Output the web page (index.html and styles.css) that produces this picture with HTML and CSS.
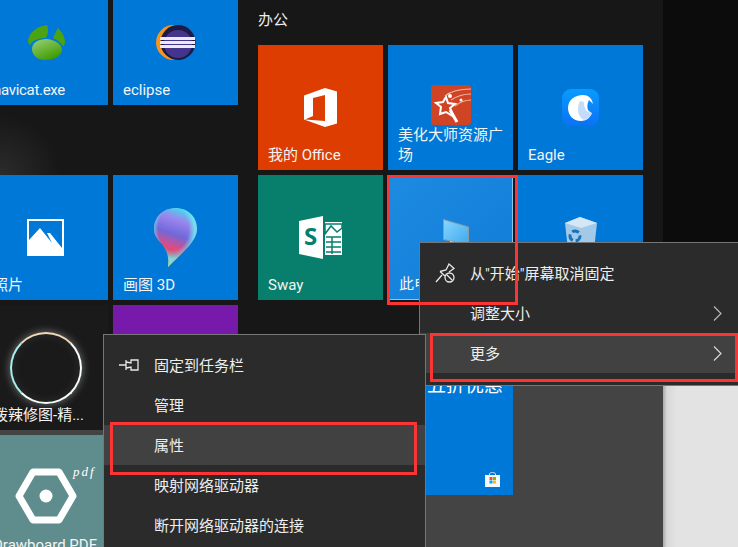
FILE: index.html
```html
<!DOCTYPE html>
<html lang="zh-CN">
<head>
    <meta charset="UTF-8">
    <meta name="viewport" content="width=device-width, initial-scale=1.0">
    <title>开始屏幕</title>
    <link rel="stylesheet" href="styles.css">
</head>
<body>

    <div class="screen">

        <!-- left group of tiles, cut off by the window edge -->
        <div class="group-left">
            <div class="tile">
                <svg class="icon" width="38" height="35" viewBox="0 0 38 35">
                    <defs>
                        <linearGradient id="navi" x1="0" y1="0" x2="0.6" y2="1">
                            <stop offset="0" stop-color="#9ad27c"/>
                            <stop offset="1" stop-color="#3f9c00"/>
                        </linearGradient>
                    </defs>
                    <path d="M1 17C1 9 9 1 20 0C22 5 21 9 19 13C12 13 6 15 3 20C2 19 1 18 1 17Z" fill="#4aa312"/>
                    <path d="M31 3C35 7 38 12 38 17C38 19 37 21 36 21C33 17 30 15 26 13C28 9 29 6 31 3Z" fill="#4aa312"/>
                    <path d="M5 24C5 18 11 14 20 14C29 15 35 20 35 25C35 31 27 35 18 35C10 35 5 30 5 24Z" fill="url(#navi)"/>
                </svg>
                <span class="label label-tight">navicat.exe</span>
            </div>
            <div class="tile">
                <svg class="icon" width="40" height="35" viewBox="0 0 40 35">
                    <circle cx="17.5" cy="17.5" r="17.5" fill="#f7941e"/>
                    <circle cx="22" cy="17.5" r="17.5" fill="#1d1a45"/>
                    <circle cx="22" cy="19" r="14" fill="#43358c"/>
                    <path d="M4 12h35v3H4zM4 16h35v3H4zM4 20h35v3H4z" fill="#ece9f4"/>
                </svg>
                <span class="label">eclipse</span>
            </div>

            <div class="tile tile-low">
                <svg class="icon" width="37" height="37" viewBox="0 0 37 37">
                    <path d="M1 1H36V36H1Z" fill="none" stroke="#fff" stroke-width="2"/>
                    <path d="M2 21L13 9L25 24L20 14L23 14L35 29V35H2Z" fill="#fff"/>
                </svg>
                <span class="label">照片</span>
            </div>
            <div class="tile tile-low">
                <svg class="icon" width="43" height="59" viewBox="0 0 43 59">
                    <defs>
                        <linearGradient id="paint" x1="0.6" y1="0" x2="0.35" y2="1">
                            <stop offset="0" stop-color="#45d8ec"/>
                            <stop offset="0.2" stop-color="#9a86ee"/>
                            <stop offset="0.45" stop-color="#7168d8"/>
                            <stop offset="0.68" stop-color="#e24a80"/>
                            <stop offset="0.85" stop-color="#d8404f"/>
                            <stop offset="1" stop-color="#f5a300"/>
                        </linearGradient>
                        <radialGradient id="paint-edge" cx="0.45" cy="0.36" r="0.5">
                            <stop offset="0.7" stop-color="#6fe8f0" stop-opacity="0"/>
                            <stop offset="1" stop-color="#6fe8f0" stop-opacity="0.9"/>
                        </radialGradient>
                    </defs>
                    <path d="M21.5 0C34 0 43 9 43 21C43 33 30 43 14 59C15 50 14 44 8 36C3 31 0 27 0 21C0 9 9 0 21.5 0Z" fill="url(#paint)"/>
                    <path d="M21.5 0C34 0 43 9 43 21C43 33 30 43 14 59C15 50 14 44 8 36C3 31 0 27 0 21C0 9 9 0 21.5 0Z" fill="url(#paint-edge)"/>
                </svg>
                <span class="label">画图 3D</span>
            </div>

            <div class="tile tile-dark">
                <div class="ring icon"></div>
                <span class="label">拨辣修图-精...</span>
            </div>
            <div class="tile tile-purple"></div>

            <div class="tile tile-slate">
                <svg class="icon icon-hex" width="108" height="60" viewBox="-24 0 108 60">
                    <path d="M3 30L17 6H43L57 30L43 54H17Z" fill="none" stroke="#fff" stroke-width="7" stroke-linejoin="round"/>
                    <circle cx="30" cy="30" r="6.5" fill="#fff"/>
                    <text class="pdf-mark" x="57" y="10">pdf</text>
                </svg>
                <span class="label">Drawboard PDF</span>
            </div>
        </div>

        <!-- office group -->
        <div class="group-main">
            <h3 class="group-title">办公</h3>
            <div class="tiles">
                <div class="tile tile-orange">
                    <svg class="icon" width="33" height="39" viewBox="0 0 33 39">
                        <path fill-rule="evenodd" d="M0 7.5L21 0L33 3.5V35.5L21 39L0 31.5ZM9 10L21 7V33L1 31.5L9 28Z" fill="#fff"/>
                    </svg>
                    <span class="label">我的 Office</span>
                </div>
                <div class="tile">
                    <svg class="icon icon-up" width="40" height="40" viewBox="0 0 40 40">
                        <rect width="40" height="40" rx="3" fill="#cf4424"/>
                        <path d="M15 12L17 18L24 19L19 23L23 32L15 27L9 29L10 22L5 18L12 17Z" fill="none" stroke="#fff" stroke-width="2"/>
                        <path d="M19 25L26 37" stroke="#fff" stroke-width="3"/>
                        <path d="M14 11C20 6 28 4 40 4M20 15C26 11 32 9 40 9M24 21C29 17 34 15 40 15" fill="none" stroke="#f3b9a8" stroke-width="1.2"/>
                        <circle cx="19" cy="11" r="2" fill="#fff"/>
                        <circle cx="30" cy="15" r="1.5" fill="#fff"/>
                    </svg>
                    <span class="label">美化大师资源广场</span>
                </div>
                <div class="tile">
                    <svg class="icon" width="37" height="37" viewBox="0 0 37 37">
                        <defs>
                            <linearGradient id="eagle" x1="0" y1="0" x2="0" y2="1">
                                <stop offset="0" stop-color="#0a9bff"/>
                                <stop offset="1" stop-color="#0a72f5"/>
                            </linearGradient>
                        </defs>
                        <rect width="37" height="37" rx="9" fill="url(#eagle)"/>
                        <path d="M6 19C6 11 13 6 21 6C26 6 30 9 31 15L27 11C25 15 25 18 26 21C28 23 29 24 30 24C28 29 24 32 19 32C11 32 6 26 6 19Z" fill="#fff"/>
                        <path d="M18 12C14 20 16 28 22 31C26 30 28 27 30 24C25 24 22 20 22 13Z" fill="#c4dcfa"/>
                    </svg>
                    <span class="label">Eagle</span>
                </div>

                <div class="tile tile-teal">
                    <svg class="icon" width="43" height="43" viewBox="0 0 43 43">
                        <path d="M0 5L24 0V43L0 38Z" fill="#fff"/>
                        <text class="sway-mark" x="5" y="29">S</text>
                        <path d="M26 6H43V39H26Z" fill="#fff"/>
                        <path d="M26 18L32 10L38 16L43 12V8H26ZM27 21H42M27 26H42M27 31H42M27 36H42M33 21V38" fill="none" stroke="#077f6c" stroke-width="1.5"/>
                    </svg>
                    <span class="label">Sway</span>
                </div>
                <div class="tile tile-selected">
                    <svg class="icon icon-pc" width="27" height="40" viewBox="0 0 27 40">
                        <defs>
                            <linearGradient id="screen" x1="0" y1="0" x2="1" y2="1">
                                <stop offset="0" stop-color="#8ad6ff"/>
                                <stop offset="1" stop-color="#3da9ee"/>
                            </linearGradient>
                        </defs>
                        <path d="M7 21H20V26H7Z" fill="#d4dde4"/>
                        <path d="M0.5 0.5L25.500 8V25L0.5 20.500Z" fill="url(#screen)" stroke="#8a9aa6"/>
                    </svg>
                    <span class="label">此电脑</span>
                </div>
                <div class="tile">
                    <svg class="icon" width="32" height="42" viewBox="0 0 32 42">
                        <path d="M0 6L15 0L32 6L28 42H4Z" fill="#a3c9e8"/>
                        <path d="M0 6L15 0L32 6L16 11Z" fill="#d5e7f5"/>
                        <circle cx="10" cy="19" r="5" fill="none" stroke="#1673bb" stroke-width="3" stroke-dasharray="7 3"/>
                    </svg>
                </div>

                <div class="tile-promo">
                    <span class="promo-text">五折优惠</span>
                    <svg class="store-bag" width="15" height="15" viewBox="0 0 15 15">
                        <path d="M4.5 3V2C4.5 0 10.5 0 10.5 2V3" fill="none" stroke="#cfe4f6"/>
                        <rect y="3" width="15" height="12" fill="#f6fafd"/>
                        <rect x="4.5" y="5" width="3" height="3" fill="#f25022"/>
                        <rect x="8" y="5" width="3" height="3" fill="#7fba00"/>
                        <rect x="4.5" y="8.500" width="3" height="3" fill="#00a4ef"/>
                        <rect x="8" y="8.500" width="3" height="3" fill="#ffb900"/>
                    </svg>
                </div>
            </div>
        </div>

        <!-- dark strip on the right, window behind it at the bottom -->
        <div class="side">
            <div class="side-dark"></div>
            <div class="side-light"></div>
        </div>

        <!-- context menus -->
        <div class="menu menu-tile">
            <div class="menu-item">
                <svg class="menu-icon" width="20" height="20" viewBox="0 0 20 20">
                    <path d="M1 19L7 12M5 8.500L11 7L14 1L19 5.500L14 9M5 8.500L10 13" fill="none" stroke="#e8e8e8" stroke-width="1.300"/>
                    <circle cx="14.500" cy="14.500" r="4.500" fill="none" stroke="#e8e8e8" stroke-width="1.300"/>
                    <path d="M11.500 11.500L17.500 17.500" stroke="#e8e8e8" stroke-width="1.300"/>
                </svg>
                <span>从"开始"屏幕取消固定</span>
            </div>
            <div class="menu-item">
                <span>调整大小</span>
                <svg class="chevron" width="9" height="15" viewBox="0 0 9 15"><path d="M1 0.500L8 7.500L1 14.500" fill="none" stroke="#b8b8b8" stroke-width="1.200"/></svg>
            </div>
            <div class="menu-item is-hover">
                <span>更多</span>
                <svg class="chevron" width="9" height="15" viewBox="0 0 9 15"><path d="M1 0.500L8 7.500L1 14.500" fill="none" stroke="#d8d8d8" stroke-width="1.200"/></svg>
            </div>
        </div>

        <div class="menu menu-more">
            <div class="menu-item">
                <svg class="menu-icon" width="20" height="14" viewBox="0 0 20 14">
                    <path d="M0 7H7M7 2V12M7 4L12 5V2H19V12H12V9L7 10" fill="none" stroke="#e8e8e8" stroke-width="1.300"/>
                </svg>
                <span>固定到任务栏</span>
            </div>
            <div class="menu-item"><span>管理</span></div>
            <div class="menu-item is-hover"><span>属性</span></div>
            <div class="menu-item"><span>映射网络驱动器</span></div>
            <div class="menu-item"><span>断开网络驱动器的连接</span></div>
        </div>

        <!-- red annotation boxes -->
        <div class="mark mark-tile"></div>
        <div class="mark mark-more"></div>
        <div class="mark mark-props"></div>

    </div>

</body>
</html>
```

FILE: styles.css
```css
* {
    box-sizing: border-box;
}
body {
    margin: 0;
    font-family: Roboto, "Noto Sans CJK SC", sans-serif;
    background: #161616;
}
.screen {
    position: relative;
    display: flex;
    width: 738px;
    height: 547px;
    overflow: hidden;
    background:
        radial-gradient(circle at 0 175px, #2c2c2c, rgba(44, 44, 44, 0) 60px),
        linear-gradient(#171717 385px, #444444 385px);
}

/* tiles */
.group-left {
    display: grid;
    flex: none;
    grid-template-columns: 125px 125px;
    grid-template-rows: 125px 190px 125px 125px;
    gap: 5px;
    width: 255px;
    margin: -20px 0 0 -17px;
}
.tile-low {
    align-self: end;
}
.group-main {
    flex: none;
    width: 405px;
    margin-left: 20px;
}
.group-title {
    height: 45px;
    margin: 0;
    padding-top: 10px;
    font-size: 15px;
    line-height: 20px;
    font-weight: normal;
    color: #eeeeee;
}
.tiles {
    display: grid;
    grid-template-columns: 125px 125px 125px;
    grid-template-rows: 125px 125px 190px;
    gap: 5px;
}
.tile {
    display: grid;
    height: 125px;
    background: #0078d7;
    color: #ffffff;
    overflow: hidden;
}
.tile > * {
    grid-area: 1 / 1;
}
.icon {
    place-self: center;
}
.icon-up {
    margin-bottom: 5px;
}
.icon-hex {
    margin-bottom: 3px;
}
.icon-pc {
    margin: 3px 0 0 11px;
}
.label {
    align-self: end;
    padding: 0 10px 5px;
    font-size: 15px;
    line-height: 20px;
    color: #f4f4f4;
}
.label-tight {
    letter-spacing: -0.3px;
}
.tile-orange { background: #dd3d00; }
.tile-teal { background: #077f6c; }
.tile-purple { background: #7719aa; }
.tile-dark { background: #1a1a1a; }
.tile-slate { background: #5f8c8c; }
.tile-selected {
    background: linear-gradient(135deg, #1e8be2, #0f7bd6);
    border: 1px solid #8cc4ee;
    border-top: none;
}
.ring {
    width: 72px;
    height: 72px;
    border: 2.5px solid #f4fffa;
    border-radius: 50%;
    border-left-color: #a8f0ee;
    border-top-color: #f2d9b8;
    background: radial-gradient(circle, #1a1a1a 55%, #333333 100%);
    box-shadow: 0 0 9px rgba(255, 255, 255, 0.4);
}
.pdf-mark {
    font-family: "Liberation Serif", serif;
    font-style: italic;
    font-size: 13px;
    letter-spacing: 2px;
    fill: #ffffff;
}
.sway-mark {
    font-family: "Open Sans", sans-serif;
    font-weight: bold;
    font-size: 24px;
    fill: #077f6c;
}
.tile-promo {
    grid-column: 2;
    grid-row: 3;
    position: relative;
    align-self: end;
    height: 125px;
    background: #0078d7;
    overflow: hidden;
}
.promo-text {
    display: block;
    padding: 5px 10px 0 0;
    text-align: right;
    font-size: 19px;
    line-height: 22px;
    color: #ffffff;
}
.store-bag {
    position: absolute;
    right: 13px;
    bottom: 8px;
}

/* right hand strip */
.side {
    display: flex;
    flex: 1;
    flex-direction: column;
}
.side-dark {
    height: 385px;
    background: #0c0c0c;
}
.side-light {
    flex: 1;
    background: linear-gradient(90deg, #a9a9a9, #d8d8d8 4px, #e3e3e3 14px);
}

/* context menus */
.menu {
    position: absolute;
    padding: 10px 0 12px;
    background: #2b2b2b;
    border: 1px solid #767676;
    color: #eeeeee;
}
.menu-tile {
    left: 419px;
    top: 242px;
    width: 330px;
    height: 144px;
}
.menu-more {
    left: 103px;
    top: 334px;
    width: 323px;
    height: 230px;
}
.menu-item {
    position: relative;
    display: flex;
    align-items: center;
    height: 40px;
    padding-left: 50px;
    font-size: 15px;
}
.menu-item span {
    margin-bottom: 2px;
}
.menu-item.is-hover {
    background: #414141;
}
.menu-icon {
    position: absolute;
    left: 15px;
    top: 50%;
    transform: translateY(-50%);
}
.chevron {
    position: absolute;
    left: 293px;
    top: 13px;
}

/* red boxes drawn on the screenshot */
.mark {
    position: absolute;
    border: 3px solid #fb3535;
}
.mark-tile {
    left: 387px;
    top: 175px;
    width: 131px;
    height: 130px;
}
.mark-more {
    left: 430px;
    top: 333px;
    width: 308px;
    height: 49px;
}
.mark-props {
    left: 110px;
    top: 422px;
    width: 307px;
    height: 53px;
}
```
